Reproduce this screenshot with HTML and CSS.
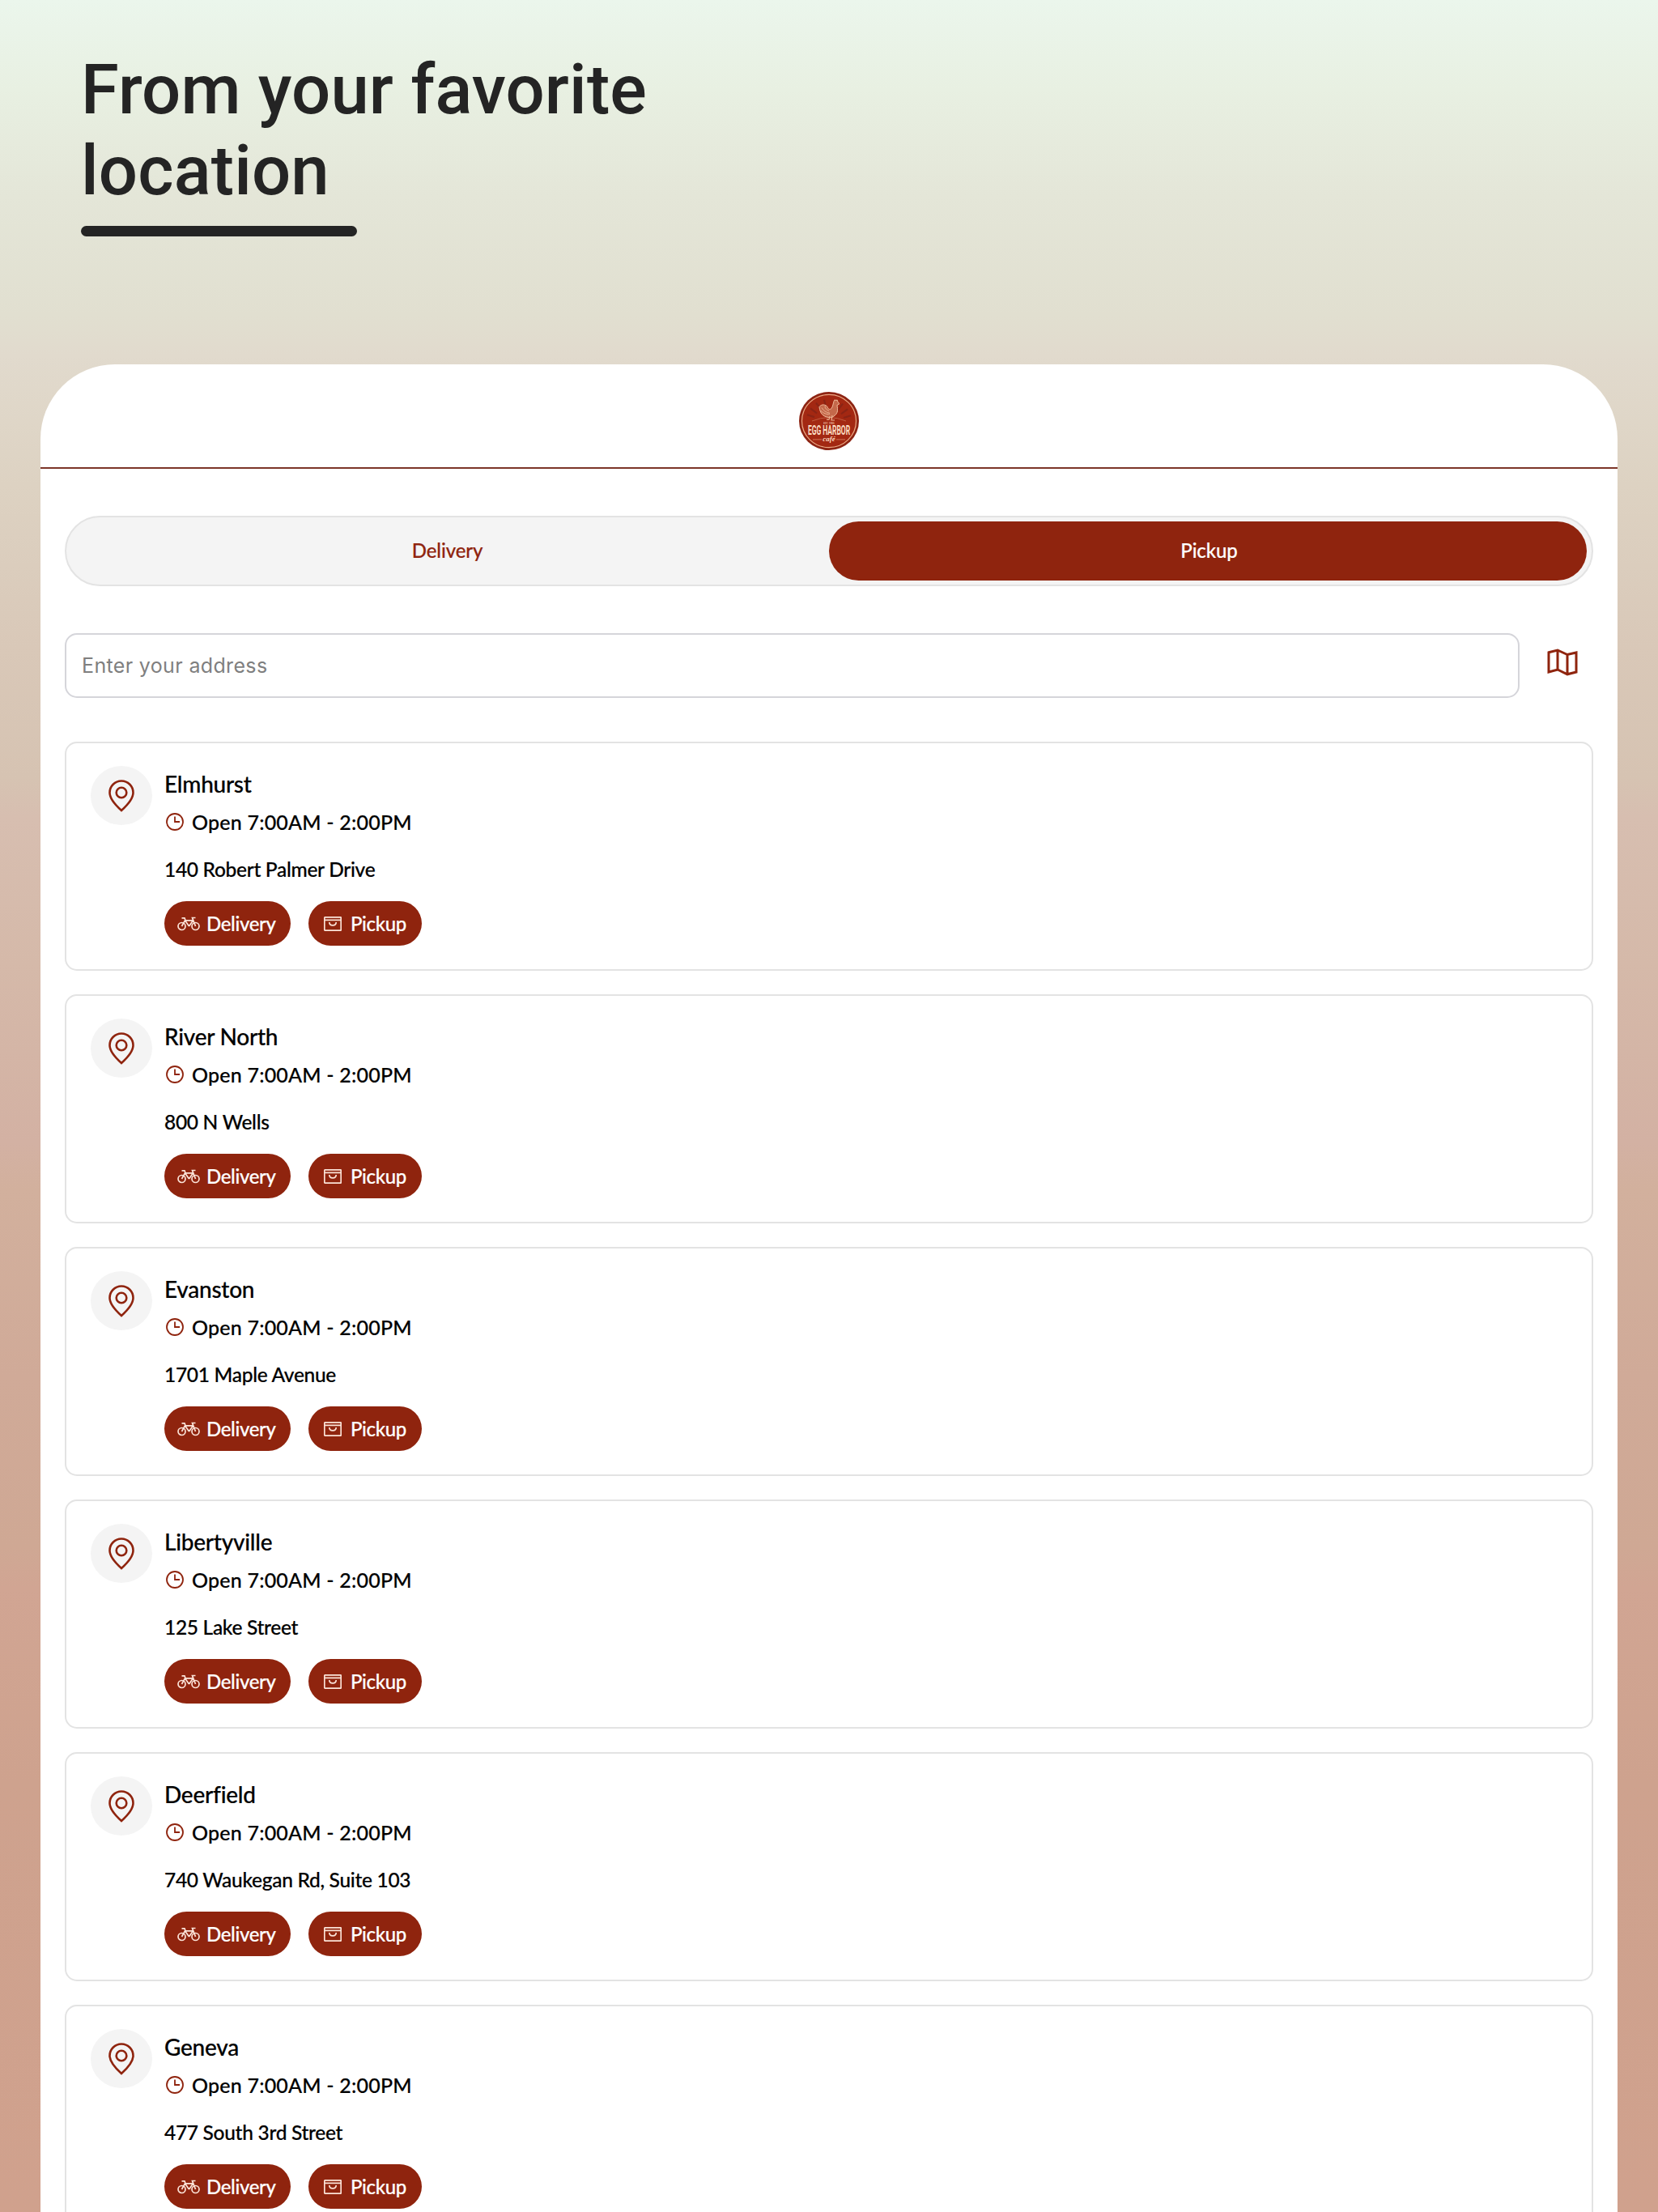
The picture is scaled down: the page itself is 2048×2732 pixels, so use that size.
FILE: index.html
```html
<!DOCTYPE html>
<html lang="en">
<head>
    <meta charset="UTF-8">
    <meta name="viewport" content="width=device-width, initial-scale=1.0">
    <title>Egg Harbor Cafe - Locations</title>
    <link rel="stylesheet" href="styles.css">
</head>
<body>
    <!-- Shared icons -->
    <svg class="sprite" width="0" height="0">
        <symbol id="icon-pin" viewBox="0 0 32 40">
            <path d="M16 38C11 33.500 1.500 24.500 1.500 16a14.500 14.500 0 0 1 29 0C30.500 24.500 21 33.500 16 38z"/>
            <circle cx="16" cy="16" r="6.300"/>
        </symbol>
        <symbol id="icon-clock" viewBox="0 0 22 22">
            <circle cx="11" cy="11" r="10"/>
            <path d="M11 4.500V11h6"/>
        </symbol>
        <symbol id="icon-bike" viewBox="0 0 28 18">
            <circle cx="5.500" cy="12" r="4.500"/>
            <circle cx="22.500" cy="12" r="4.500"/>
            <path d="M5.500 12L9.500 4.800h10M9.500 4.800l5 7.200M5.500 1.800h3.500l1 3M22.500 12L18.500 1.500h4M14.500 12l5-7.200"/>
        </symbol>
        <symbol id="icon-bag" viewBox="0 0 22 18">
            <rect x="0.800" y="0.800" width="20.400" height="16.400" rx="0.800"/>
            <path d="M1 4.300h20M6.800 7c0 5.200 8.400 5.200 8.400 0"/>
        </symbol>
        <symbol id="icon-map" viewBox="0 0 38 34">
            <path d="M2 4.800L13 2l12 5.500L36 5v24l-11 2.800L13 26 2 29zM13 2v24M25 7.500v24"/>
        </symbol>
    </svg>

    <div class="hero">
        <h1>From your favorite<br>location</h1>
        <div class="underline"></div>
    </div>

    <div class="sheet">
        <div class="header">
            <svg class="logo" viewBox="0 0 74 74" preserveAspectRatio="none">
                <circle cx="37" cy="37" r="37" fill="#8d2413"/>
                <circle cx="37" cy="37" r="33.500" fill="#a32812" stroke="#eda884" stroke-width="1.200"/>
                <g stroke="#8a2415" stroke-width="2.200">
                    <path d="M10 29l9 3M14 21l8 6M21 14l6 8M31 10l2 9M45 10l-3 9M54 15l-6 8M60 22l-8 6M64 30l-9 3"/>
                </g>
                <path d="M16 37q21-9 42 0" fill="none" stroke="#c66a4d" stroke-width="0.800"/>
                <!-- rooster -->
                <path d="M25 19c3-4 8-3 10 0 1 3 3 4 5 2 2-3 2-6 3-9l1-2 2 1 1-1 1 3 2 2-3 2c1 6 1 10-3 13-3 3-6 3-9 2-5-1-9-4-10-13z" fill="#c4694b" stroke="#f1bd9d" stroke-width="1"/>
                <path d="M28 20c2 4 5 6 10 7M27 24c3 3 7 5 11 4M32 18c0 3 2 5 5 6" fill="none" stroke="#f1bd9d" stroke-width="0.800"/>
                <path d="M38 31l-1 4h-3M41 30l-1 6h4" fill="none" stroke="#eeb493" stroke-width="1.200"/>
                <text x="37" y="41" class="logo-est">EST. 1985</text>
                <text transform="translate(37 54) scale(0.530 1)" class="logo-name">EGG HARBOR</text>
                <text x="37" y="63" class="logo-cafe">café</text>
                <path d="M17 60.500h11M46 60.500h11" stroke="#d98667" stroke-width="0.800"/>
            </svg>
        </div>

        <div class="tabs">
            <div class="tab">Delivery</div>
            <div class="tab active">Pickup</div>
        </div>

        <div class="search">
            <input type="text" placeholder="Enter your address">
            <svg class="map-icon"><use href="#icon-map"/></svg>
        </div>

        <div class="locations" id="locations">
            <!-- Location cards are inserted here -->
        </div>
    </div>

    <script>
        const locations = [
            { name: 'Elmhurst', address: '140 Robert Palmer Drive' },
            { name: 'River North', address: '800 N Wells' },
            { name: 'Evanston', address: '1701 Maple Avenue' },
            { name: 'Libertyville', address: '125 Lake Street' },
            { name: 'Deerfield', address: '740 Waukegan Rd, Suite 103' },
            { name: 'Geneva', address: '477 South 3rd Street' }
        ];

        const list = document.getElementById('locations');

        locations.forEach(location => {
            const card = document.createElement('div');
            card.className = 'card';
            card.innerHTML = `
                <div class="pin"><svg><use href="#icon-pin"/></svg></div>
                <div class="info">
                    <div class="name">${location.name}</div>
                    <div class="hours"><svg><use href="#icon-clock"/></svg>Open 7:00AM - 2:00PM</div>
                    <div class="address">${location.address}</div>
                    <div class="chips">
                        <div class="chip delivery"><svg><use href="#icon-bike"/></svg>Delivery</div>
                        <div class="chip pickup"><svg><use href="#icon-bag"/></svg>Pickup</div>
                    </div>
                </div>
            `;
            list.appendChild(card);
        });
    </script>
</body>
</html>
```

FILE: styles.css
```css
* {
    box-sizing: border-box;
}
body {
    margin: 0;
    height: 2732px;
    overflow: hidden;
    display: flex;
    flex-direction: column;
    font-family: Lato, sans-serif;
    font-weight: 500;
    color: #000;
    background: linear-gradient(#ebf6ec 0px, #e8f0e2 110px, #e4e6d8 240px, #e1dfd0 390px, #e1dacd 440px, #ddd2c2 600px, #d9c8b8 800px, #d6c3b2 960px, #d7beb0 1010px, #d5b9a9 1190px, #d3b1a3 1410px, #d2b09d 1470px, #d0aa98 1700px, #cfa894 1910px, #d1a593 1960px, #cea28e 2200px, #d0a18d 2732px);
}
.sprite {
    position: absolute;
}
svg {
    fill: none;
    stroke: #8f240e;
    stroke-width: 2;
    flex: none;
}
.hero {
    height: 450px;
    flex: none;
    padding: 61px 100px 0;
}
h1 {
    margin: 0;
    font-family: Roboto, sans-serif;
    font-weight: 500;
    font-size: 85px;
    line-height: 100px;
    letter-spacing: 0.150px;
    color: #242424;
}
.underline {
    width: 341px;
    height: 13px;
    margin-top: 18px;
    border-radius: 7px;
    background: #242424;
}
.sheet {
    flex: 1 0 auto;
    margin: 0 50px;
    background: #fff;
    border-radius: 92px 92px 0 0;
}
.header {
    height: 129px;
    padding-top: 34px;
    display: flex;
    justify-content: center;
    border-bottom: 2px solid #7c3528;
}
.logo {
    width: 74px;
    height: 72px;
    stroke: none;
}
.logo text {
    text-anchor: middle;
    fill: #fbdcc3;
}
.logo-est {
    font-size: 3px;
}
.logo-name {
    font-family: Roboto, sans-serif;
    font-weight: 700;
    font-size: 16px;
}
.logo-cafe {
    font-family: "Liberation Serif", serif;
    font-style: italic;
    font-weight: 700;
    font-size: 9px;
}
.tabs {
    height: 87px;
    margin: 58px 30px 0;
    padding: 5px 6px;
    display: flex;
    background: #f4f4f4;
    border: 2px solid #e3e3e3;
    border-radius: 44px;
}
.tab {
    width: 50%;
    display: flex;
    align-items: center;
    justify-content: center;
    padding: 0 7px 2px 0;
    border-radius: 37px;
    font-size: 24px;
    letter-spacing: -0.100px;
    color: #8f240e;
    -webkit-text-stroke: 0.200px;
}
.tab.active {
    padding: 0 0 2px 3px;
    color: #fff;
    background: #8f240e;
}
.search {
    margin: 58px 30px 0;
    display: flex;
}
.search input {
    width: 1797px;
    height: 80px;
    padding: 0 19px;
    border: 2px solid #d5d5da;
    border-radius: 15px;
    font-family: Inter, sans-serif;
    font-size: 25px;
    letter-spacing: 0.350px;
}
.search input::placeholder {
    color: #7f7f7f;
}
.map-icon {
    width: 38px;
    height: 34px;
    margin: 19px 0 0 34px;
    stroke-width: 3;
}
.locations {
    margin: 54px 30px 0;
    display: flex;
    flex-direction: column;
    gap: 29px;
}
.card {
    height: 283px;
    padding: 28px 30px 29px;
    display: flex;
    gap: 15px;
    border: 2px solid #e3e3e3;
    border-radius: 15px;
}
.pin {
    width: 76px;
    height: 73px;
    display: flex;
    align-items: center;
    justify-content: center;
    background: #f4f4f4;
    border-radius: 50%;
}
.pin svg {
    width: 32px;
    height: 40px;
    stroke-width: 2.600;
}
.info {
    padding-top: 2px;
    -webkit-text-stroke: 0.200px;
}
.name {
    font-size: 28px;
    line-height: 40px;
    letter-spacing: -0.250px;
}
.hours {
    display: flex;
    align-items: center;
    margin-top: 10px;
    font-size: 25px;
    line-height: 34px;
    letter-spacing: 0.200px;
}
.hours svg {
    width: 22px;
    height: 22px;
    margin: 0 10px 0 2px;
    stroke-width: 1.800;
}
.address {
    margin-top: 25px;
    font-size: 24.500px;
    line-height: 34px;
    letter-spacing: -0.300px;
}
.chips {
    display: flex;
    gap: 22px;
    margin-top: 22px;
}
.chip {
    height: 55px;
    display: flex;
    align-items: center;
    border-radius: 28px;
    font-size: 24px;
    letter-spacing: -0.350px;
    color: #fff;
    background: #8f240e;
}
.chip svg {
    stroke: #fbe3d8;
    stroke-width: 1.700;
}
.delivery {
    width: 156px;
    padding-left: 16px;
    gap: 8px;
}
.delivery svg {
    width: 28px;
    height: 18px;
}
.pickup {
    width: 140px;
    padding-left: 19px;
    gap: 11px;
}
.pickup svg {
    width: 22px;
    height: 18px;
}
```
